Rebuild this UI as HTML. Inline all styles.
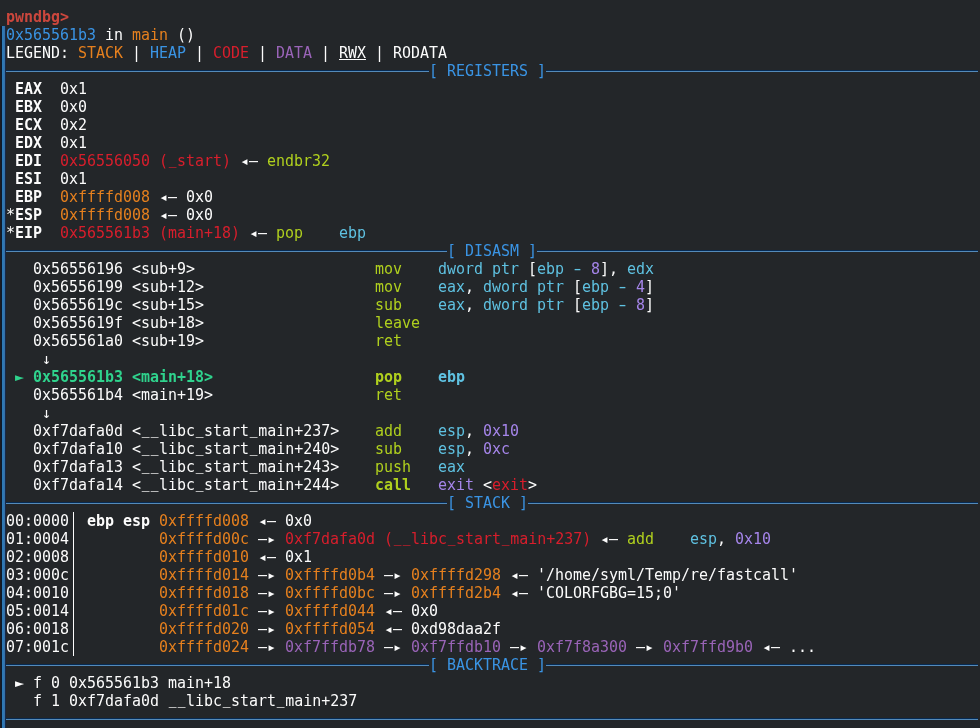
<!DOCTYPE html><html><head><meta charset="utf-8"><title>pwndbg</title><style>
html,body{margin:0;padding:0;background:#232629;}
body{width:980px;height:728px;overflow:hidden;position:relative;}
#t{will-change:transform;position:absolute;left:6px;top:8px;margin:0;width:974px;font-family:"DejaVu Sans Mono","Liberation Mono",monospace;font-size:14.96px;line-height:18px;color:#fcfcfc;}
#t div{height:18px;white-space:pre;overflow:hidden;}
#t div>span{display:inline-block;height:18px;vertical-align:top;}
#bar{position:absolute;left:0;top:26px;width:6px;height:702px;background:linear-gradient(90deg,#1c1b21 0 1px,#0c1a2a 1px 2px,#2e78b4 2px 4px,#376fa6 4px 5px,#14294a 5px 6px);}
b{font-weight:bold;}
.hy{display:inline-block;transform:scaleX(1.5);}
.us{display:inline-block;transform:translateY(-2.5px) scaleX(0.86);}
i.hl{display:inline-block;height:18px;vertical-align:top;background:linear-gradient(#548ab9,#548ab9) 0 9px/100% 1px no-repeat,linear-gradient(#062a52,#062a52) 0 8px/100% 1px no-repeat;}
i.vb{display:inline-block;width:9px;height:18px;vertical-align:top;background:linear-gradient(#fcfcfc,#fcfcfc) 4px 0/1px 100% no-repeat;}
u{text-decoration:underline;}
.w{color:#fcfcfc}
.r{color:#d81e2c}
.o{color:#e6801e}
.b{color:#3a94e4}
.p{color:#a585ea}
.m{color:#9a64b8}
.g{color:#b0d01e}
.c{color:#5fc2e2}
.G{color:#2fd38d}
.pr{color:#cb473d}
</style></head><body><div id="bar"></div><div id="t">
<div><span class="pr" style="width:72px"><b>pwndbg&gt; </b></span></div>
<div><span class="b" style="width:90px">0x565561b3</span><span style="width:36px"> in </span><span class="o" style="width:36px">main</span><span style="width:27px"> ()</span></div>
<div><span style="width:72px">LEGEND: </span><span class="o" style="width:45px">STACK</span><span style="width:27px"> | </span><span class="b" style="width:36px">HEAP</span><span style="width:27px"> | </span><span class="r" style="width:36px">CODE</span><span style="width:27px"> | </span><span class="m" style="width:36px">DATA</span><span style="width:27px"> | </span><span style="width:27px"><u>RWX</u></span><span style="width:81px"> | RODATA</span></div>
<div><i class="hl" style="width:423px"></i><span class="b" style="width:117px">[ REGISTERS ]</span><i class="hl" style="width:432px"></i></div>
<div><span style="width:9px"> </span><span style="width:27px"><b>EAX</b></span><span style="width:18px">  </span><span style="width:27px">0x1</span></div>
<div><span style="width:9px"> </span><span style="width:27px"><b>EBX</b></span><span style="width:18px">  </span><span style="width:27px">0x0</span></div>
<div><span style="width:9px"> </span><span style="width:27px"><b>ECX</b></span><span style="width:18px">  </span><span style="width:27px">0x2</span></div>
<div><span style="width:9px"> </span><span style="width:27px"><b>EDX</b></span><span style="width:18px">  </span><span style="width:27px">0x1</span></div>
<div><span style="width:9px"> </span><span style="width:27px"><b>EDI</b></span><span style="width:18px">  </span><span class="r" style="width:171px">0x56556050 (<span class="us">_</span>start)</span><span style="width:36px"> ◂— </span><span class="g" style="width:63px">endbr32</span></div>
<div><span style="width:9px"> </span><span style="width:27px"><b>ESI</b></span><span style="width:18px">  </span><span style="width:27px">0x1</span></div>
<div><span style="width:9px"> </span><span style="width:27px"><b>EBP</b></span><span style="width:18px">  </span><span class="o" style="width:90px">0xffffd008</span><span style="width:63px"> ◂— 0x0</span></div>
<div><span style="width:9px">*</span><span style="width:27px"><b>ESP</b></span><span style="width:18px">  </span><span class="o" style="width:90px">0xffffd008</span><span style="width:63px"> ◂— 0x0</span></div>
<div><span style="width:9px">*</span><span style="width:27px"><b>EIP</b></span><span style="width:18px">  </span><span class="r" style="width:180px">0x565561b3 (main+18)</span><span style="width:36px"> ◂— </span><span class="g" style="width:63px">pop    </span><span class="c" style="width:27px">ebp</span></div>
<div><i class="hl" style="width:441px"></i><span class="b" style="width:90px">[ DISASM ]</span><i class="hl" style="width:441px"></i></div>
<div><span style="width:369px">   0x56556196 &lt;sub+9&gt;                    </span><span class="g" style="width:63px">mov    </span><span class="c" style="width:90px">dword ptr </span><span style="width:9px">[</span><span class="c" style="width:54px">ebp <span class="hy">-</span> </span><span class="p" style="width:9px">8</span><span style="width:27px">], </span><span class="c" style="width:27px">edx</span></div>
<div><span style="width:369px">   0x56556199 &lt;sub+12&gt;                   </span><span class="g" style="width:63px">mov    </span><span class="c" style="width:27px">eax</span><span style="width:18px">, </span><span class="c" style="width:90px">dword ptr </span><span style="width:9px">[</span><span class="c" style="width:54px">ebp <span class="hy">-</span> </span><span class="p" style="width:9px">4</span><span style="width:9px">]</span></div>
<div><span style="width:369px">   0x5655619c &lt;sub+15&gt;                   </span><span class="g" style="width:63px">sub    </span><span class="c" style="width:27px">eax</span><span style="width:18px">, </span><span class="c" style="width:90px">dword ptr </span><span style="width:9px">[</span><span class="c" style="width:54px">ebp <span class="hy">-</span> </span><span class="p" style="width:9px">8</span><span style="width:9px">]</span></div>
<div><span style="width:369px">   0x5655619f &lt;sub+18&gt;                   </span><span class="g" style="width:63px">leave  </span></div>
<div><span style="width:369px">   0x565561a0 &lt;sub+19&gt;                   </span><span class="g" style="width:63px">ret    </span></div>
<div><span style="width:45px">    ↓</span></div>
<div><span class="G" style="width:369px"><b> ► 0x565561b3 &lt;main+18&gt;                  </b></span><span class="g" style="width:63px"><b>pop    </b></span><span class="c" style="width:27px"><b>ebp</b></span></div>
<div><span style="width:369px">   0x565561b4 &lt;main+19&gt;                  </span><span class="g" style="width:63px">ret    </span></div>
<div><span style="width:45px">    ↓</span></div>
<div><span style="width:369px">   0xf7dafa0d &lt;<span class="us">_</span><span class="us">_</span>libc<span class="us">_</span>start<span class="us">_</span>main+237&gt;    </span><span class="g" style="width:63px">add    </span><span class="c" style="width:27px">esp</span><span style="width:18px">, </span><span class="p" style="width:36px">0x10</span></div>
<div><span style="width:369px">   0xf7dafa10 &lt;<span class="us">_</span><span class="us">_</span>libc<span class="us">_</span>start<span class="us">_</span>main+240&gt;    </span><span class="g" style="width:63px">sub    </span><span class="c" style="width:27px">esp</span><span style="width:18px">, </span><span class="p" style="width:27px">0xc</span></div>
<div><span style="width:369px">   0xf7dafa13 &lt;<span class="us">_</span><span class="us">_</span>libc<span class="us">_</span>start<span class="us">_</span>main+243&gt;    </span><span class="g" style="width:63px">push   </span><span class="c" style="width:27px">eax</span></div>
<div><span style="width:369px">   0xf7dafa14 &lt;<span class="us">_</span><span class="us">_</span>libc<span class="us">_</span>start<span class="us">_</span>main+244&gt;    </span><span class="g" style="width:63px"><b>call   </b></span><span class="p" style="width:45px">exit </span><span style="width:9px">&lt;</span><span class="r" style="width:36px">exit</span><span style="width:9px">&gt;</span></div>
<div><i class="hl" style="width:441px"></i><span class="b" style="width:81px">[ STACK ]</span><i class="hl" style="width:450px"></i></div>
<div><span style="width:63px">00:0000</span><i class="vb"></i><span style="width:9px"> </span><span style="width:63px"><b>ebp esp</b></span><span style="width:9px"> </span><span class="o" style="width:90px">0xffffd008</span><span style="width:63px"> ◂— 0x0</span></div>
<div><span style="width:63px">01:0004</span><i class="vb"></i><span style="width:9px"> </span><span style="width:72px">        </span><span class="o" style="width:90px">0xffffd00c</span><span style="width:36px"> —▸ </span><span class="r" style="width:306px">0xf7dafa0d (<span class="us">_</span><span class="us">_</span>libc<span class="us">_</span>start<span class="us">_</span>main+237)</span><span style="width:36px"> ◂— </span><span class="g" style="width:63px">add    </span><span class="c" style="width:27px">esp</span><span style="width:18px">, </span><span class="p" style="width:36px">0x10</span></div>
<div><span style="width:63px">02:0008</span><i class="vb"></i><span style="width:9px"> </span><span style="width:72px">        </span><span class="o" style="width:90px">0xffffd010</span><span style="width:63px"> ◂— 0x1</span></div>
<div><span style="width:63px">03:000c</span><i class="vb"></i><span style="width:9px"> </span><span style="width:72px">        </span><span class="o" style="width:90px">0xffffd014</span><span style="width:36px"> —▸ </span><span class="o" style="width:90px">0xffffd0b4</span><span style="width:36px"> —▸ </span><span class="o" style="width:90px">0xffffd298</span><span style="width:297px"> ◂— &#x27;/home/syml/Temp/re/fastcall&#x27;</span></div>
<div><span style="width:63px">04:0010</span><i class="vb"></i><span style="width:9px"> </span><span style="width:72px">        </span><span class="o" style="width:90px">0xffffd018</span><span style="width:36px"> —▸ </span><span class="o" style="width:90px">0xffffd0bc</span><span style="width:36px"> —▸ </span><span class="o" style="width:90px">0xffffd2b4</span><span style="width:180px"> ◂— &#x27;COLORFGBG=15;0&#x27;</span></div>
<div><span style="width:63px">05:0014</span><i class="vb"></i><span style="width:9px"> </span><span style="width:72px">        </span><span class="o" style="width:90px">0xffffd01c</span><span style="width:36px"> —▸ </span><span class="o" style="width:90px">0xffffd044</span><span style="width:63px"> ◂— 0x0</span></div>
<div><span style="width:63px">06:0018</span><i class="vb"></i><span style="width:9px"> </span><span style="width:72px">        </span><span class="o" style="width:90px">0xffffd020</span><span style="width:36px"> —▸ </span><span class="o" style="width:90px">0xffffd054</span><span style="width:126px"> ◂— 0xd98daa2f</span></div>
<div><span style="width:63px">07:001c</span><i class="vb"></i><span style="width:9px"> </span><span style="width:72px">        </span><span class="o" style="width:90px">0xffffd024</span><span style="width:36px"> —▸ </span><span class="m" style="width:90px">0xf7ffdb78</span><span style="width:36px"> —▸ </span><span class="m" style="width:90px">0xf7ffdb10</span><span style="width:36px"> —▸ </span><span class="m" style="width:90px">0xf7f8a300</span><span style="width:36px"> —▸ </span><span class="m" style="width:90px">0xf7ffd9b0</span><span style="width:63px"> ◂— ...</span></div>
<div><i class="hl" style="width:423px"></i><span class="b" style="width:117px">[ BACKTRACE ]</span><i class="hl" style="width:432px"></i></div>
<div><span style="width:225px"> ► f 0 0x565561b3 main+18</span></div>
<div><span style="width:351px">   f 1 0xf7dafa0d <span class="us">_</span><span class="us">_</span>libc<span class="us">_</span>start<span class="us">_</span>main+237</span></div>
<div><i class="hl" style="width:972px"></i></div>
</div></body></html>
